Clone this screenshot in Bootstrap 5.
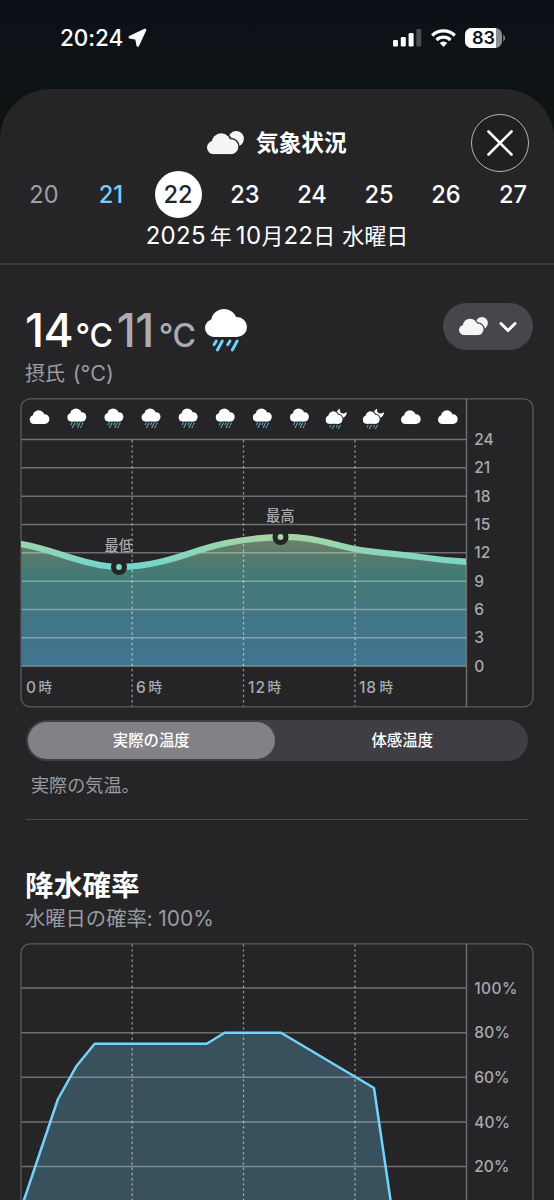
<!DOCTYPE html>
<html lang="ja" data-bs-theme="dark">
<head>
<meta charset="utf-8">
<meta name="viewport" content="width=device-width, initial-scale=1">
<title>気象状況</title>
<link href="https://cdn.jsdelivr.net/npm/bootstrap@5.3.0/dist/css/bootstrap.min.css" rel="stylesheet">
<style>
body{font-family:Inter,"Noto Sans CJK JP",sans-serif;background:linear-gradient(#0b0f1a 0,#0c1216 35px,#0d1413 120px);color:#fff;height:1200px;overflow:hidden}
svg{display:block;flex:none}
.statusbar{height:89px;padding:0 49px 0 60px}
.statusbar>div{height:75px}
.clock{font-size:22.5px;font-weight:500;line-height:75px;letter-spacing:-.05px}
.sheet{background:#252527;border-radius:50px 50px 0 0;height:1111px;--gap:#252527}
.sheet-head{height:176px;padding-top:25px;border-bottom:2px solid #3c3c3e}
.title-row{height:58px;padding:0 25px 0 207px}
.title-row h1{font-size:22.7px;font-weight:600;line-height:58px;margin-left:12px}
.btn-close-round{width:58px;height:58px;border:1.3px solid #b5b5b7;background:#202022;padding:0}
.days{display:grid;grid-template-columns:repeat(8,67px);margin:-1px 0 0 10.5px;height:47px;font-size:23.6px;font-weight:500}
.days span{line-height:47px;text-align:center}
.days .past{color:#a09fa4;font-weight:400}
.days .today{color:#71cff8}
.days .chosen{width:47px;background:#fff;color:#252527;border-radius:50%;justify-self:center}
.full-date{font-size:24px;line-height:36px;letter-spacing:.3px}
.full-date i{font-style:normal;font-size:22px;letter-spacing:0}
.temp-head{padding:38px 21px 0 25px;height:133px}
.temps{font-size:46px;font-weight:500;line-height:54px;letter-spacing:-.6px;white-space:nowrap}
.temps b{font-weight:500;font-size:32px;line-height:1;letter-spacing:-.3px;margin-left:2.5px}
.low{color:#acabb3;margin-left:4px}
.low b{margin-left:5px}
.big-icon{margin:6px 0 0 9px}
.muted{color:#9b9aa0}
.unit{font-size:20px;line-height:33px}
.unit span{font-size:21.5px;margin-left:2px}
.menu-btn{width:90px;height:47px;background:#47464b;--gap:#47464b;padding:0 15px}
.segment{margin:12px 26px 0;height:41px;background:#3f3e43;padding:2px;font-size:15.4px;font-weight:500}
.segment span{flex:1;line-height:38px;text-align:center;padding-left:4px}
.segment .on{background:#828186;flex:0 0 246.5px;height:37px;padding:0}
.note{font-size:18.1px;line-height:30px;margin:9px 0 0 31px}
.rule{height:1px;margin:19px 26px 0;background:#4b4b4e}
.rain-head{padding:46px 0 0 25px;height:123px}
.rain-head h2{font-size:28.7px;font-weight:700;line-height:40px;margin:0}
.rain-head p{font-size:20.3px;line-height:25px}
.rain-head span{font-size:21px}
.chart{margin-left:20px}
.chart text{font-family:Inter,"Noto Sans CJK JP",sans-serif;font-size:15.5px;font-weight:500;fill:#aaa9af}
.chart .kanji{font-size:14.3px}
.chart .hour{font-size:13.6px}
.gridline{stroke:#fff;stroke-opacity:.34;stroke-width:1.4;fill:none}
.frame{stroke:#5b5b5e;stroke-width:1.3;fill:none}
.dots{stroke:#fff;stroke-opacity:.5;stroke-width:1.3;stroke-dasharray:2.4 2.8;fill:none}
</style>
</head>
<body>
<svg width="0" height="0" class="position-absolute">
  <defs>
    <g id="cloud"><circle cx="9" cy="19" r="9"/><circle cx="19" cy="13" r="13"/><circle cx="32" cy="18" r="10"/><rect x="9" y="12" width="23" height="16"/></g>
    <g id="drops" stroke-width="2.900" stroke-linecap="round"><path d="M11.300 32 9 35.800M17.300 32 12.400 41M25 32 22.700 35.800M32.200 32 27.300 41"/></g>
    <g id="drizzle"><use href="#cloud" fill="#fff"/><path stroke="#60aabd" stroke-width="2.400" stroke-linecap="round" d="M10 31 8 35M16.500 31 11.500 41M22.500 31 20.500 35M28 31 23 41M34.500 31 32.500 35M31 38l-1.500 3"/></g>
    <g id="night"><path fill="#fff" d="M33-1C24 4 23 14 29 20 36 26 47 21 49.500 8 40 14 31 9 33-1z"/><use href="#cloud" transform="translate(0 5.500) scale(.93 1.040)" fill="#252527" stroke="#252527" stroke-width="4.500"/><use href="#cloud" transform="translate(0 5.500) scale(.93 1.040)" fill="#fff"/><path stroke="#60aabd" stroke-width="2.400" stroke-linecap="round" d="M12 38l-2 4M20 38l-5 8M27 38l-2 4M34 38l-5 8"/></g>
    <symbol id="partly" viewBox="0 0 37 23.500"><circle cx="29.200" cy="7.800" r="7.700" fill="#f5f5f6"/><g style="fill:var(--gap);stroke:var(--gap);stroke-width:4"><use href="#cloud" transform="translate(0 2.300) scale(.745)"/></g><use href="#cloud" transform="translate(0 2.300) scale(.745)" fill="#f5f5f6"/></symbol>
  </defs>
</svg>

<header class="statusbar">
  <div class="d-flex align-items-center justify-content-between">
    <div class="d-flex align-items-center">
      <span class="clock">20:24</span>
      <svg width="19" height="19" viewBox="0 0 19 19" style="margin-left:5px"><path d="M17 2 1.800 9.200 8.400 10.600 9.800 17.400z" fill="#fff" stroke="#fff" stroke-width="2.600" stroke-linejoin="round"/></svg>
    </div>
    <div class="d-flex align-items-center">
      <svg width="30" height="18" viewBox="0 0 30 18"><g fill="#fff"><rect x="1" y="11" width="5" height="6.500" rx="1.300"/><rect x="8.800" y="8" width="5" height="9.500" rx="1.300"/><rect x="16.600" y="4" width="5" height="13.500" rx="1.300"/><rect x="24.300" y="0" width="5" height="17.500" rx="1.300" opacity=".25"/></g></svg>
      <svg width="25" height="18" viewBox="0 0 25 18" style="margin-left:9px" fill="none" stroke="#fff" stroke-width="3.200"><path d="M1.200 6.500a16.100 16.100 0 0 1 22.600 0"/><path d="M5.500 11a10 10 0 0 1 14 0"/><path d="M12.500 18 8.700 14a5.400 5.400 0 0 1 7.600 0z" fill="#fff" stroke="none"/></svg>
      <svg width="40" height="20" viewBox="0 0 40 20" style="margin-left:9px"><defs><clipPath id="bat"><rect width="37" height="20" rx="6.500"/></clipPath></defs><g clip-path="url(#bat)"><rect width="37" height="20" fill="#8b8e90"/><rect width="31" height="20" fill="#fff"/></g><path d="M38.300 6.500q1.700 1 1.700 3.500t-1.700 3.500z" fill="#8b8e90"/><text x="7" y="16" textLength="23" lengthAdjust="spacingAndGlyphs" font-size="17" font-weight="600" fill="#0c1214">83</text></svg>
    </div>
  </div>
</header>

<main class="sheet">
  <div class="sheet-head">
    <div class="title-row d-flex align-items-center">
      <svg width="37" height="23.500"><use href="#partly"/></svg>
      <h1 class="mb-0">気象状況</h1>
      <button class="btn btn-close-round rounded-circle ms-auto d-flex align-items-center justify-content-center" aria-label="閉じる"><svg width="26" height="26" viewBox="0 0 26 26"><path d="M1.500 1.500l23 23M24.500 1.500l-23 23" stroke="#fff" stroke-width="2.600" stroke-linecap="round"/></svg></button>
    </div>
    <div class="days"><span class="past">20</span><span class="today">21</span><span class="chosen">22</span><span>23</span><span>24</span><span>25</span><span>26</span><span>27</span></div>
    <div class="full-date text-center">2025<i style="margin:0 4px">年</i>10<i>月</i>22<i>日</i> <i>水曜日</i></div>
  </div>

  <section>
    <div class="temp-head d-flex justify-content-between">
      <div>
        <div class="d-flex">
          <div class="temps">14<b>°C</b><span class="low">11<b>°C</b></span></div>
          <svg width="43" height="43" viewBox="0 0 43 43" class="big-icon"><use href="#cloud" fill="#fff"/><use href="#drops" stroke="#6cd3ff"/></svg>
        </div>
        <div class="unit muted">摂氏 <span>(°C)</span></div>
      </div>
      <button class="btn menu-btn rounded-pill d-flex align-items-center justify-content-between" aria-label="表示項目"><svg width="29" height="18.400"><use href="#partly"/></svg><svg width="18" height="12" viewBox="0 0 18 12"><path d="M2 2.500 9 9.500l7-7" fill="none" stroke="#fff" stroke-width="3" stroke-linecap="round" stroke-linejoin="round"/></svg></button>
    </div>

    <svg class="chart" width="514" height="310" viewBox="20 398 514 310">
      <defs>
        <linearGradient id="area" gradientUnits="userSpaceOnUse" x1="0" y1="537" x2="0" y2="666"><stop offset="0" stop-color="#6a856a"/><stop offset=".13" stop-color="#5b7b6c"/><stop offset=".28" stop-color="#437a74"/><stop offset=".5" stop-color="#44777e"/><stop offset=".65" stop-color="#427588"/><stop offset="1" stop-color="#40738f"/></linearGradient>
        <linearGradient id="stroke" gradientUnits="userSpaceOnUse" x1="0" y1="535" x2="0" y2="567"><stop offset="0" stop-color="#a9d5a3"/><stop offset="1" stop-color="#72d6cd"/></linearGradient>
        <clipPath id="plot"><rect x="21" y="398" width="445" height="309"/></clipPath>
      </defs>
      <path fill="url(#area)" d="M21 544C40 547 56 553 72 558S103 567 119 567C150 567 176 558 200 550S250 538 280 537C310 536 330 544 355 549 375 553 400 554 420 557S452 561 466 562V666H21z"/>
      <path class="gridline" d="M21 439.500H466M21 467.800H466M21 496.200H466M21 524.500H466M21 552.800H466M21 581.200H466M21 609.500H466M21 637.800H466M21 666.200H466"/>
      <path class="dots" d="M132.200 440V707M243.500 440V707M355 440V707"/>
      <rect class="frame" x="21" y="398.800" width="512" height="308" rx="9"/>
      <path class="gridline" d="M466.500 399V707"/>
      <g clip-path="url(#plot)"><path fill="none" stroke="url(#stroke)" stroke-width="6.300" d="M15 543 21 544C40 547 56 553 72 558S103 567 119 567C150 567 176 558 200 550S250 538 280 537C310 536 330 544 355 549 375 553 400 554 420 557S452 561 470 562"/></g>
      <g fill="#252527"><circle cx="119" cy="567" r="8"/><circle cx="280.500" cy="537" r="8"/></g>
      <circle cx="119" cy="567" r="2.900" fill="#78d7cc"/><circle cx="280.500" cy="537" r="2.900" fill="#a6d6a5"/>
      <text class="kanji" x="104.500" y="550.500" textLength="28.500">最低</text>
      <text class="kanji" x="266" y="520.500" textLength="28.500">最高</text>
      <text x="26" y="692.500">0</text><text class="hour" x="38.500" y="692.300">時</text>
      <text x="136" y="692.500">6</text><text class="hour" x="148.500" y="692.300">時</text>
      <text x="248" y="692.500" textLength="17">12</text><text class="hour" x="267.500" y="692.300">時</text>
      <text x="359" y="692.500" textLength="17">18</text><text class="hour" x="379.500" y="692.300">時</text>
      <text x="474.300" y="445">24</text><text x="474.300" y="473.400">21</text><text x="474.300" y="501.800">18</text><text x="474.300" y="530.100">15</text><text x="474.300" y="558.400">12</text><text x="474.300" y="586.800">9</text><text x="474.300" y="615.100">6</text><text x="474.300" y="643.400">3</text><text x="474.300" y="671.800">0</text>
      <g fill="#fff">
        <use href="#cloud" transform="translate(29.700 410.300) scale(.469 .49)"/>
        <use href="#drizzle" transform="translate(67.400 408.500) scale(.45 .465)"/>
        <use href="#drizzle" transform="translate(104.500 408.500) scale(.45 .465)"/>
        <use href="#drizzle" transform="translate(141.600 408.500) scale(.45 .465)"/>
        <use href="#drizzle" transform="translate(178.700 408.500) scale(.45 .465)"/>
        <use href="#drizzle" transform="translate(215.800 408.500) scale(.45 .465)"/>
        <use href="#drizzle" transform="translate(252.900 408.500) scale(.45 .465)"/>
        <use href="#drizzle" transform="translate(290 408.500) scale(.45 .465)"/>
        <use href="#night" transform="translate(325.700 408.900) scale(.43)"/>
        <use href="#night" transform="translate(362.900 408.900) scale(.43)"/>
        <use href="#cloud" transform="translate(401 410.300) scale(.469 .49)"/>
        <use href="#cloud" transform="translate(438 410.300) scale(.469 .49)"/>
      </g>
    </svg>

    <div class="segment d-flex rounded-pill"><span class="on rounded-pill">実際の温度</span><span>体感温度</span></div>
    <p class="note muted mb-0">実際の気温。</p>
    <div class="rule"></div>
  </section>

  <section>
    <div class="rain-head"><h2>降水確率</h2><p class="muted mb-0">水曜日の確率: <span>100%</span></p></div>
    <svg class="chart" width="514" height="257" viewBox="20 943 514 257">
      <path fill="#38515c" d="M24 1200 58 1099 76.700 1065.700 94.700 1043.700H206.700L224.700 1032.700H281L374 1088 390.500 1200z"/>
      <path class="gridline" d="M21 988H466M21 1032.700H466M21 1077.300H466M21 1122H466M21 1166.500H466M466.500 944V1200"/>
      <path class="dots" d="M132.200 944V1200M243.500 944V1200M355 944V1200"/>
      <path class="frame" d="M21 1200V952.800a9 9 0 0 1 9-9H524a9 9 0 0 1 9 9V1200"/>
      <path fill="none" stroke="#74d3fb" stroke-width="2.500" stroke-linejoin="round" d="M22 1206 24 1200 58 1099 76.700 1065.700 94.700 1043.700H206.700L224.700 1032.700H281L374 1088 390.500 1200 391.500 1206"/>
      <text x="474.300" y="993.700" textLength="43">100%</text><text x="474.300" y="1038.400" textLength="35.500">80%</text><text x="474.300" y="1083" textLength="35">60%</text><text x="474.300" y="1127.600" textLength="35.500">40%</text><text x="474.300" y="1172.200" textLength="35">20%</text>
    </svg>
  </section>
</main>
<script src="https://cdn.jsdelivr.net/npm/bootstrap@5.3.0/dist/js/bootstrap.bundle.min.js"></script>
</body>
</html>
